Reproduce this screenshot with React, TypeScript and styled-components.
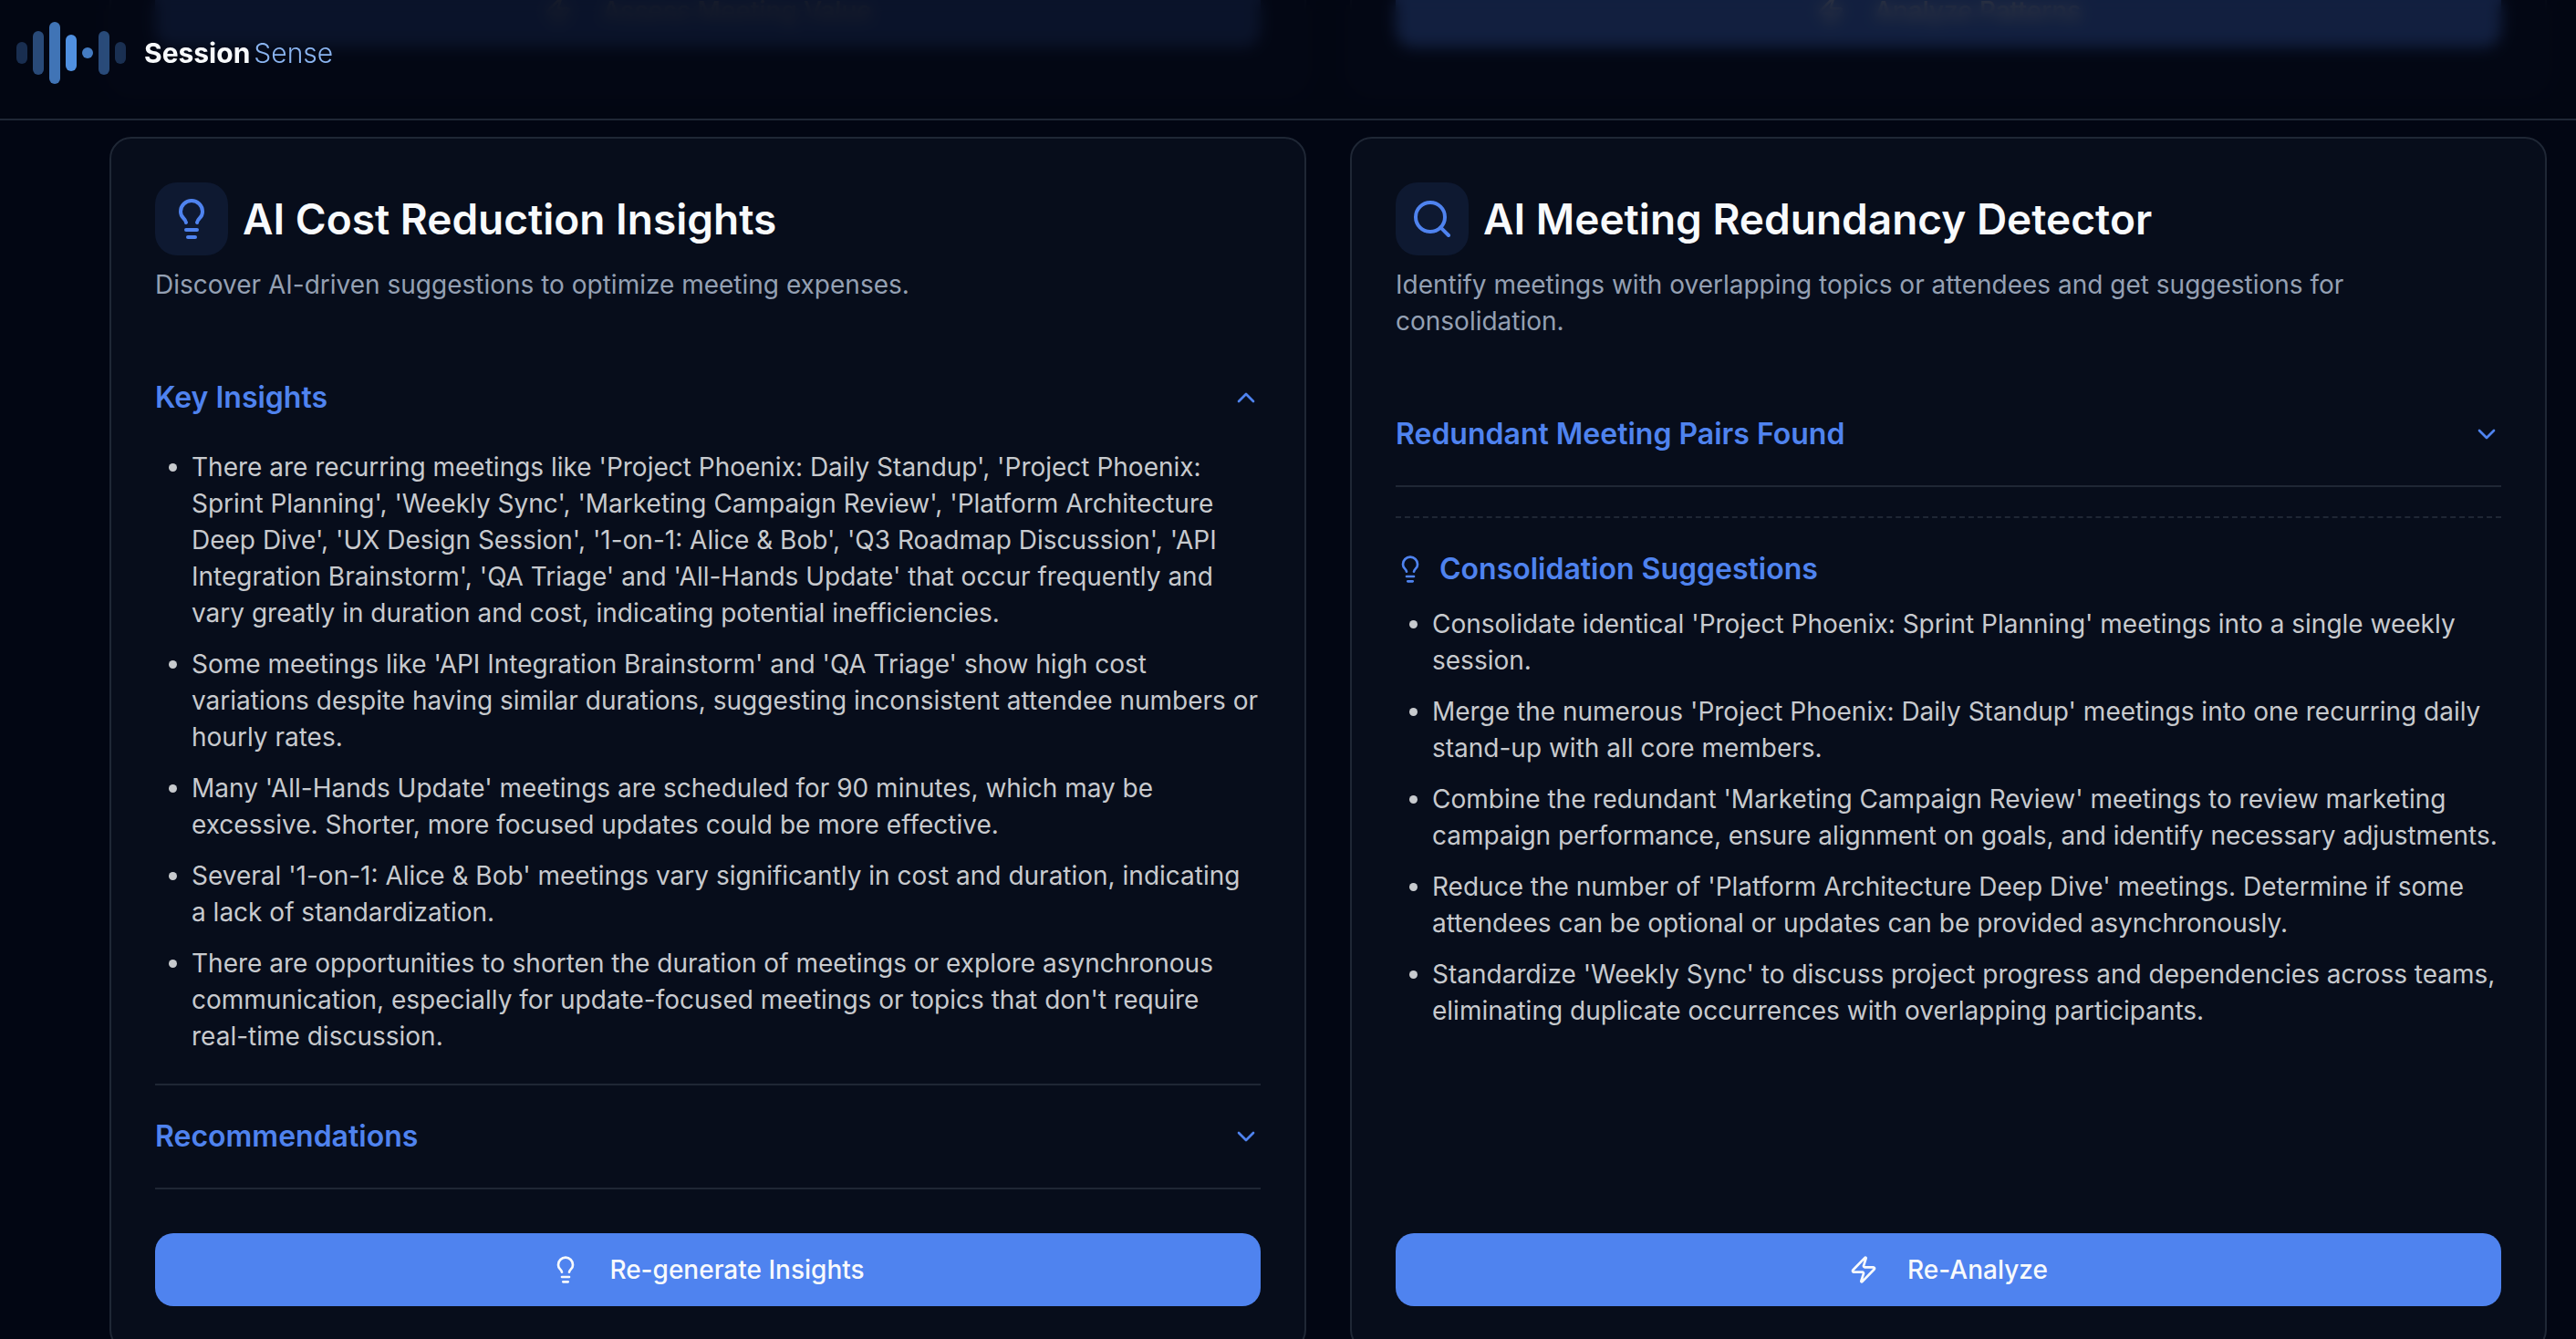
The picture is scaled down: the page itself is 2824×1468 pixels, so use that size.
import React, { useState } from "react";
import styled, { createGlobalStyle } from "styled-components";
import { ChevronDown, Lightbulb, Search, Zap } from "lucide-react";

const color = {
  page: "#020613",
  card: "#070d1b",
  line: "#1f2735",
  primary: "#4f83ef",
  heading: "#f8fafc",
  muted: "#94a0b3",
  body: "#c7cace",
};

const GlobalStyle = createGlobalStyle`
  *, *::before, *::after { box-sizing: border-box; }
  body {
    margin: 0;
    background: ${color.page};
    color: ${color.heading};
    font-family: Inter, "Liberation Sans", sans-serif;
    font-size: 28px;
    line-height: 40px;
    font-optical-sizing: none;
    -webkit-font-smoothing: antialiased;
  }
  h2, h3, p, ul { margin: 0; padding: 0; }
  button { font: inherit; border: 0; cursor: pointer; }
`;

const Page = styled.div`
  height: 100vh;
  overflow: hidden;
`;

const Header = styled.header`
  position: sticky;
  top: 0;
  z-index: 10;
  height: 132px;
  padding: 0 18px;
  border-bottom: 2px solid ${color.line};
  background: rgba(2, 6, 19, 0.8);
  backdrop-filter: blur(8px);
`;

const Brand = styled.a`
  display: inline-flex;
  align-items: center;
  gap: 20px;
  height: 116px;
  color: ${color.heading};
  font-size: 30px;
  text-decoration: none;
`;

const BrandName = styled.span`
  display: flex;
  gap: 4px;
  font-weight: 700;
`;

const BrandLight = styled.span`
  font-weight: 300;
  color: #8ab4f0;
`;

const Main = styled.main`
  display: grid;
  gap: 48px;
  margin-top: -132px;
  padding: 0 32px 48px 120px;
`;

const Row = styled.div<{ $tail?: boolean }>`
  display: grid;
  grid-template-columns: repeat(2, minmax(0, 1fr));
  gap: 48px;
  height: ${(p) => (p.$tail ? "102px" : "auto")};
`;

const Card = styled.section<{ $tail?: boolean }>`
  display: flex;
  flex-direction: column;
  justify-content: ${(p) => (p.$tail ? "flex-end" : "flex-start")};
  min-height: 0;
  padding: 48px;
  border: 2px solid ${color.line};
  border-top-width: ${(p) => (p.$tail ? "0" : "2px")};
  border-radius: ${(p) => (p.$tail ? "0 0 24px 24px" : "24px")};
  background: ${color.card};
`;

const CardHeader = styled.div`
  display: grid;
  gap: 12px;
  padding-bottom: 48px;
`;

const TitleRow = styled.div`
  display: flex;
  align-items: center;
  gap: 16px;
`;

const IconTile = styled.span`
  display: flex;
  padding: 16px;
  border-radius: 24px;
  background: #0e1931;
  color: ${color.primary};
`;

const Title = styled.h2`
  font-size: 46px;
  line-height: 64px;
  font-weight: 600;
`;

const Description = styled.p`
  color: ${color.muted};
`;

const Item = styled.div`
  border-bottom: 2px solid ${color.line};
`;

const Trigger = styled.button`
  display: flex;
  align-items: center;
  justify-content: space-between;
  width: 100%;
  padding: 32px 0;
  background: transparent;
  color: ${color.primary};
  font-size: 32px;
  line-height: 48px;
  font-weight: 600;
  text-align: left;

  svg { transition: transform 0.2s; }
  &[aria-expanded="true"] svg { transform: rotate(180deg); }
`;

const Panel = styled.div`
  padding-bottom: 32px;
`;

const BulletList = styled.ul`
  display: grid;
  gap: 16px;
  padding-left: 40px;
  color: ${color.body};
`;

const Suggestions = styled.div`
  margin-top: 32px;
  padding-top: 32px;
  border-top: 2px dashed ${color.line};
`;

const SubHeading = styled.h3`
  display: flex;
  align-items: center;
  gap: 16px;
  margin-bottom: 16px;
  color: ${color.primary};
  font-size: 32px;
  line-height: 48px;
  font-weight: 600;
`;

const CardFooter = styled.div`
  margin-top: auto;
  padding-top: 48px;
`;

const ActionButton = styled.button`
  display: flex;
  align-items: center;
  justify-content: center;
  gap: 32px;
  flex-shrink: 0;
  width: 100%;
  height: 80px;
  border-radius: 20px;
  background: ${color.primary};
  color: ${color.heading};
  font-weight: 500;

  &:disabled { opacity: 0.5; cursor: default; }
`;

const logoBars = [
  { h: 24, o: 0.3 },
  { h: 48, o: 0.5 },
  { h: 68, o: 0.8 },
  { h: 40, o: 1 },
  { h: 12, o: 0.85 },
  { h: 48, o: 0.5 },
  { h: 24, o: 0.3 },
];

function Logo() {
  return (
    <svg width="120" height="68" viewBox="0 0 120 68" aria-hidden="true">
      {logoBars.map((bar, i) => (
        <rect key={i} x={i * 18} y={(68 - bar.h) / 2} width="12" height={bar.h} rx="6" fill="#5090e0" opacity={bar.o} />
      ))}
    </svg>
  );
}

const insights = [
  "There are recurring meetings like 'Project Phoenix: Daily Standup', 'Project Phoenix: Sprint Planning', 'Weekly Sync', 'Marketing Campaign Review', 'Platform Architecture Deep Dive', 'UX Design Session', '1-on-1: Alice & Bob', 'Q3 Roadmap Discussion', 'API Integration Brainstorm', 'QA Triage' and 'All-Hands Update' that occur frequently and vary greatly in duration and cost, indicating potential inefficiencies.",
  "Some meetings like 'API Integration Brainstorm' and 'QA Triage' show high cost variations despite having similar durations, suggesting inconsistent attendee numbers or hourly rates.",
  "Many 'All-Hands Update' meetings are scheduled for 90 minutes, which may be excessive. Shorter, more focused updates could be more effective.",
  "Several '1-on-1: Alice & Bob' meetings vary significantly in cost and duration, indicating a lack of standardization.",
  "There are opportunities to shorten the duration of meetings or explore asynchronous communication, especially for update-focused meetings or topics that don't require real-time discussion.",
];

const suggestions = [
  "Consolidate identical 'Project Phoenix: Sprint Planning' meetings into a single weekly session.",
  "Merge the numerous 'Project Phoenix: Daily Standup' meetings into one recurring daily stand-up with all core members.",
  "Combine the redundant 'Marketing Campaign Review' meetings to review marketing campaign performance, ensure alignment on goals, and identify necessary adjustments.",
  "Reduce the number of 'Platform Architecture Deep Dive' meetings. Determine if some attendees can be optional or updates can be provided asynchronously.",
  "Standardize 'Weekly Sync' to discuss project progress and dependencies across teams, eliminating duplicate occurrences with overlapping participants.",
];

function Bullets({ items }: { items: string[] }) {
  return (
    <BulletList>
      {items.map((text) => (
        <li key={text}>{text}</li>
      ))}
    </BulletList>
  );
}

function AccordionItem(props: { title: string; open?: boolean; children?: React.ReactNode }) {
  const [open, setOpen] = useState(Boolean(props.open));
  return (
    <Item>
      <Trigger type="button" aria-expanded={open} onClick={() => setOpen(!open)}>
        {props.title}
        <ChevronDown size={32} />
      </Trigger>
      {open && props.children && <Panel>{props.children}</Panel>}
    </Item>
  );
}

export default function App() {
  return (
    <Page>
      <GlobalStyle />
      <Header>
        <Brand href="#">
          <Logo />
          <BrandName>
            Session<BrandLight>Sense</BrandLight>
          </BrandName>
        </Brand>
      </Header>
      <Main>
        <Row $tail>
          <Card $tail>
            <ActionButton type="button" disabled>
              <Zap size={32} />
              Assess Meeting Value
            </ActionButton>
          </Card>
          <Card $tail>
            <ActionButton type="button">
              <Zap size={32} />
              Analyze Patterns
            </ActionButton>
          </Card>
        </Row>
        <Row>
          <Card>
            <CardHeader>
              <TitleRow>
                <IconTile>
                  <Lightbulb size={48} />
                </IconTile>
                <Title>AI Cost Reduction Insights</Title>
              </TitleRow>
              <Description>Discover AI-driven suggestions to optimize meeting expenses.</Description>
            </CardHeader>
            <AccordionItem title="Key Insights" open>
              <Bullets items={insights} />
            </AccordionItem>
            <AccordionItem title="Recommendations" />
            <CardFooter>
              <ActionButton type="button">
                <Lightbulb size={32} />
                Re-generate Insights
              </ActionButton>
            </CardFooter>
          </Card>
          <Card>
            <CardHeader>
              <TitleRow>
                <IconTile>
                  <Search size={48} />
                </IconTile>
                <Title>AI Meeting Redundancy Detector</Title>
              </TitleRow>
              <Description>
                Identify meetings with overlapping topics or attendees and get suggestions for consolidation.
              </Description>
            </CardHeader>
            <AccordionItem title="Redundant Meeting Pairs Found" />
            <Suggestions>
              <SubHeading>
                <Lightbulb size={32} />
                Consolidation Suggestions
              </SubHeading>
              <Bullets items={suggestions} />
            </Suggestions>
            <CardFooter>
              <ActionButton type="button">
                <Zap size={32} />
                Re-Analyze
              </ActionButton>
            </CardFooter>
          </Card>
        </Row>
      </Main>
    </Page>
  );
}
